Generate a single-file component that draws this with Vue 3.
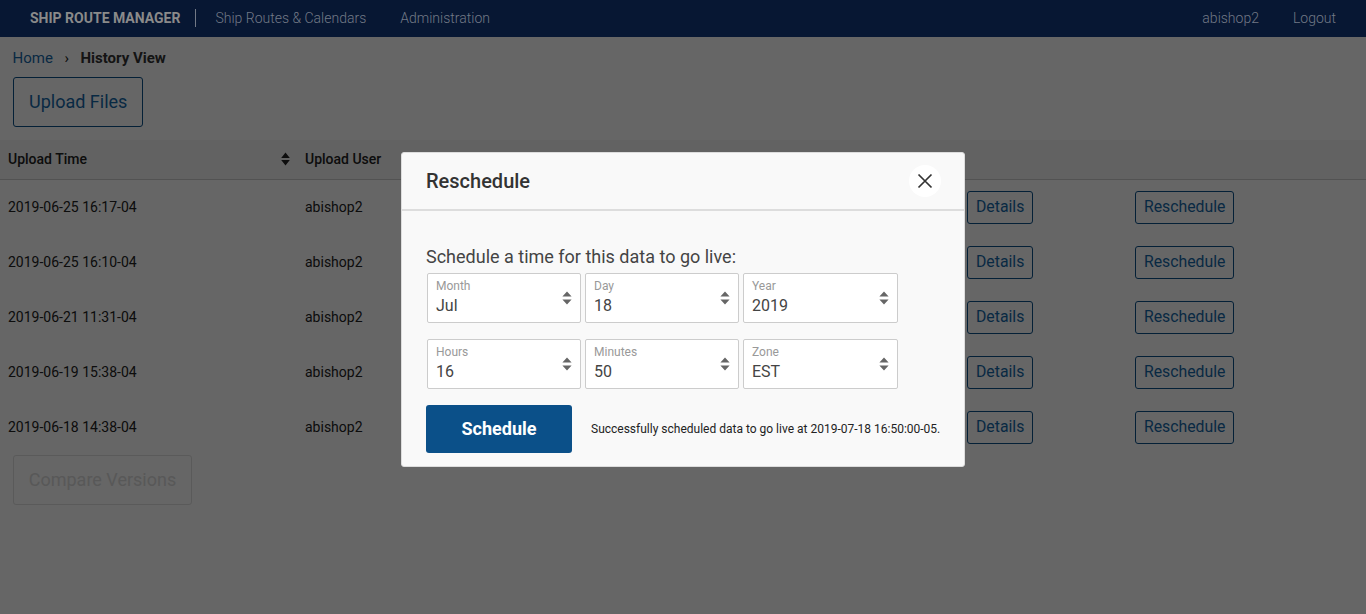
<template>
  <div class="page">
    <header class="topbar">
      <span class="brand">SHIP ROUTE MANAGER</span>
      <a class="nav-link first">Ship Routes &amp; Calendars</a>
      <a class="nav-link">Administration</a>
      <span class="spacer"></span>
      <a class="nav-link user">abishop2</a>
      <a class="nav-link logout">Logout</a>
    </header>

    <main class="content">
      <div class="crumbs">
        <a class="crumb-link">Home</a>
        <span class="crumb-sep">›</span>
        <strong>History View</strong>
      </div>
      <button class="big-btn upload">Upload Files</button>

      <div class="table">
        <div class="row head">
          <div class="cell text sortable">
            Upload Time
            <svg class="sort" width="9" height="14" viewBox="0 0 9 14"><path d="M4.5 0.5 8.8 6H0.2zM4.5 13.5 0.2 8H8.8z" /></svg>
          </div>
          <div class="cell text">Upload User</div>
          <div class="cell"></div>
          <div class="cell"></div>
        </div>
        <div v-for="time in uploads" :key="time" class="row">
          <div class="cell text">{{ time }}</div>
          <div class="cell text">abishop2</div>
          <div class="cell"><button class="small-btn">Details</button></div>
          <div class="cell"><button class="small-btn">Reschedule</button></div>
        </div>
      </div>

      <button class="big-btn compare" disabled>Compare Versions</button>
    </main>

    <div class="overlay">
      <div class="modal">
        <div class="modal-head">
          <h2>Reschedule</h2>
          <button class="close" aria-label="Close">
            <svg width="16" height="16" viewBox="0 0 16 16"><path d="M1.5 1.5 14.5 14.5M14.5 1.5 1.5 14.5" /></svg>
          </button>
        </div>
        <div class="modal-body">
          <p class="prompt">Schedule a time for this data to go live:</p>
          <div class="fields">
            <div v-for="f in fields" :key="f.label" class="field">
              <span class="field-label">{{ f.label }}</span>
              <span class="field-value">{{ f.value }}</span>
              <svg class="caret" width="10" height="14" viewBox="0 0 10 14"><path d="M5 0.5 9.6 5.5H0.4zM5 13.5 0.4 8.5H9.6z" /></svg>
            </div>
          </div>
          <div class="actions">
            <button class="schedule">Schedule</button>
            <span class="message">Successfully scheduled data to go live at 2019-07-18 16:50:00-05.</span>
          </div>
        </div>
      </div>
    </div>
  </div>
</template>

<script setup>
const uploads = [
  '2019-06-25 16:17-04',
  '2019-06-25 16:10-04',
  '2019-06-21 11:31-04',
  '2019-06-19 15:38-04',
  '2019-06-18 14:38-04'
]

const fields = [
  { label: 'Month', value: 'Jul' },
  { label: 'Day', value: '18' },
  { label: 'Year', value: '2019' },
  { label: 'Hours', value: '16' },
  { label: 'Minutes', value: '50' },
  { label: 'Zone', value: 'EST' }
]
</script>

<style>
html, body {
  height: 100%;
  overflow: hidden;
}
</style>

<style scoped>
.page {
  position: relative;
  height: 614px;
  overflow: hidden;
  background: #fff;
  font-family: Roboto, "Liberation Sans", sans-serif;
  color: #222;
}

.topbar {
  position: relative;
  z-index: 2;
  display: flex;
  align-items: center;
  height: 37px;
  box-sizing: border-box;
  padding: 0 30px 1px;
  background: #071733;
  font-size: 14px;
  color: #727986;
}

.brand {
  padding-right: 15px;
  border-right: 1px solid #727986;
  line-height: 18px;
  font-size: 14px;
  font-weight: 700;
  color: #8a8a8a;
}

.nav-link {
  margin-left: 34px;
  font-weight: 300;
}

.nav-link.first {
  margin-left: 19px;
}

.spacer {
  flex: 1;
}

.nav-link.logout {
  margin-left: 34px;
}

.crumbs {
  display: flex;
  align-items: center;
  height: 40px;
  box-sizing: border-box;
  padding: 2px 0 0 12.5px;
  font-size: 15px;
}

.crumb-link {
  color: #1668a8;
}

.crumb-sep {
  margin: 0 11.5px;
}

.crumbs strong {
  font-weight: 700;
  color: #333;
}

.big-btn {
  display: block;
  height: 50px;
  margin-left: 13px;
  padding: 0 15px 2px;
  background: transparent;
  border: 1px solid #0b5089;
  border-radius: 3px;
  font-family: inherit;
  font-size: 18px;
  color: #1668a8;
}

.big-btn.compare {
  width: 179px;
  padding: 0 0 2px;
  border-color: #e0e0e0;
  white-space: nowrap;
  color: #dcdcdc;
}

.table {
  margin-top: 13px;
}

.row {
  display: grid;
  grid-template-columns: 297px 662px 168px 1fr;
  align-items: center;
  height: 55px;
  font-size: 14px;
}

.row.head {
  height: 40px;
  background: #f5f5f5;
  border-bottom: 1px solid #ccc;
  box-sizing: border-box;
  font-weight: 500;
}

.cell {
  padding-left: 8px;
}

.cell.text {
  padding-bottom: 2px;
}

.sortable {
  display: flex;
  align-items: center;
  justify-content: space-between;
  padding-right: 7px;
}

.sort path {
  fill: #222;
}

.small-btn {
  height: 33px;
  padding: 0 8px 2px;
  background: transparent;
  border: 1px solid #0b5089;
  border-radius: 3px;
  font-family: inherit;
  font-size: 15.8px;
  color: #1668a8;
}

.overlay {
  position: absolute;
  inset: 0;
  z-index: 1;
  background: rgba(0, 0, 0, 0.6);
}

.modal {
  position: absolute;
  left: 401px;
  top: 152px;
  width: 564px;
  height: 315px;
  box-sizing: border-box;
  background: #f9f9f9;
  border: 1px solid #ddd;
  border-radius: 3px;
}

.modal-head {
  display: flex;
  align-items: center;
  justify-content: space-between;
  height: 58px;
  box-sizing: border-box;
  padding: 0 24px;
  border-bottom: 2px solid #ddd;
}

.modal-head h2 {
  margin: 0;
  font-size: 20px;
  font-weight: 500;
  color: #333;
}

.close {
  display: flex;
  align-items: center;
  justify-content: center;
  width: 32px;
  height: 32px;
  margin-right: -1px;
  padding: 0;
  background: #fff;
  border: none;
  border-radius: 50%;
}

.close path {
  fill: none;
  stroke: #333;
  stroke-width: 1.7;
}

.modal-body {
  padding: 35px 24px 0;
}

.prompt {
  margin: 0 0 6px;
  font-size: 18px;
  line-height: 21px;
  color: #444;
}

.fields {
  display: grid;
  grid-template-columns: 154px 154px 155px;
  gap: 16px 4px;
  margin-left: 1px;
}

.field {
  position: relative;
  display: flex;
  flex-direction: column;
  height: 50px;
  box-sizing: border-box;
  padding: 5px 8px;
  background: #fff;
  border: 1px solid #ccc;
  border-radius: 2px;
}

.field-label {
  font-size: 12px;
  line-height: 14px;
  color: #999;
}

.field-value {
  margin-top: 3px;
  font-size: 16px;
  line-height: 20px;
  color: #444;
}

.caret {
  position: absolute;
  right: 8px;
  top: 17px;
}

.caret path {
  fill: #666;
}

.actions {
  display: flex;
  align-items: center;
  margin-top: 16px;
}

.schedule {
  flex: none;
  width: 146px;
  height: 48px;
  padding-bottom: 2px;
  background: #0b5089;
  border: none;
  border-radius: 3px;
  font-family: inherit;
  font-size: 18px;
  font-weight: 700;
  color: #fff;
}

.message {
  margin-left: 19px;
  font-size: 12px;
  white-space: nowrap;
  color: #222;
}
</style>
